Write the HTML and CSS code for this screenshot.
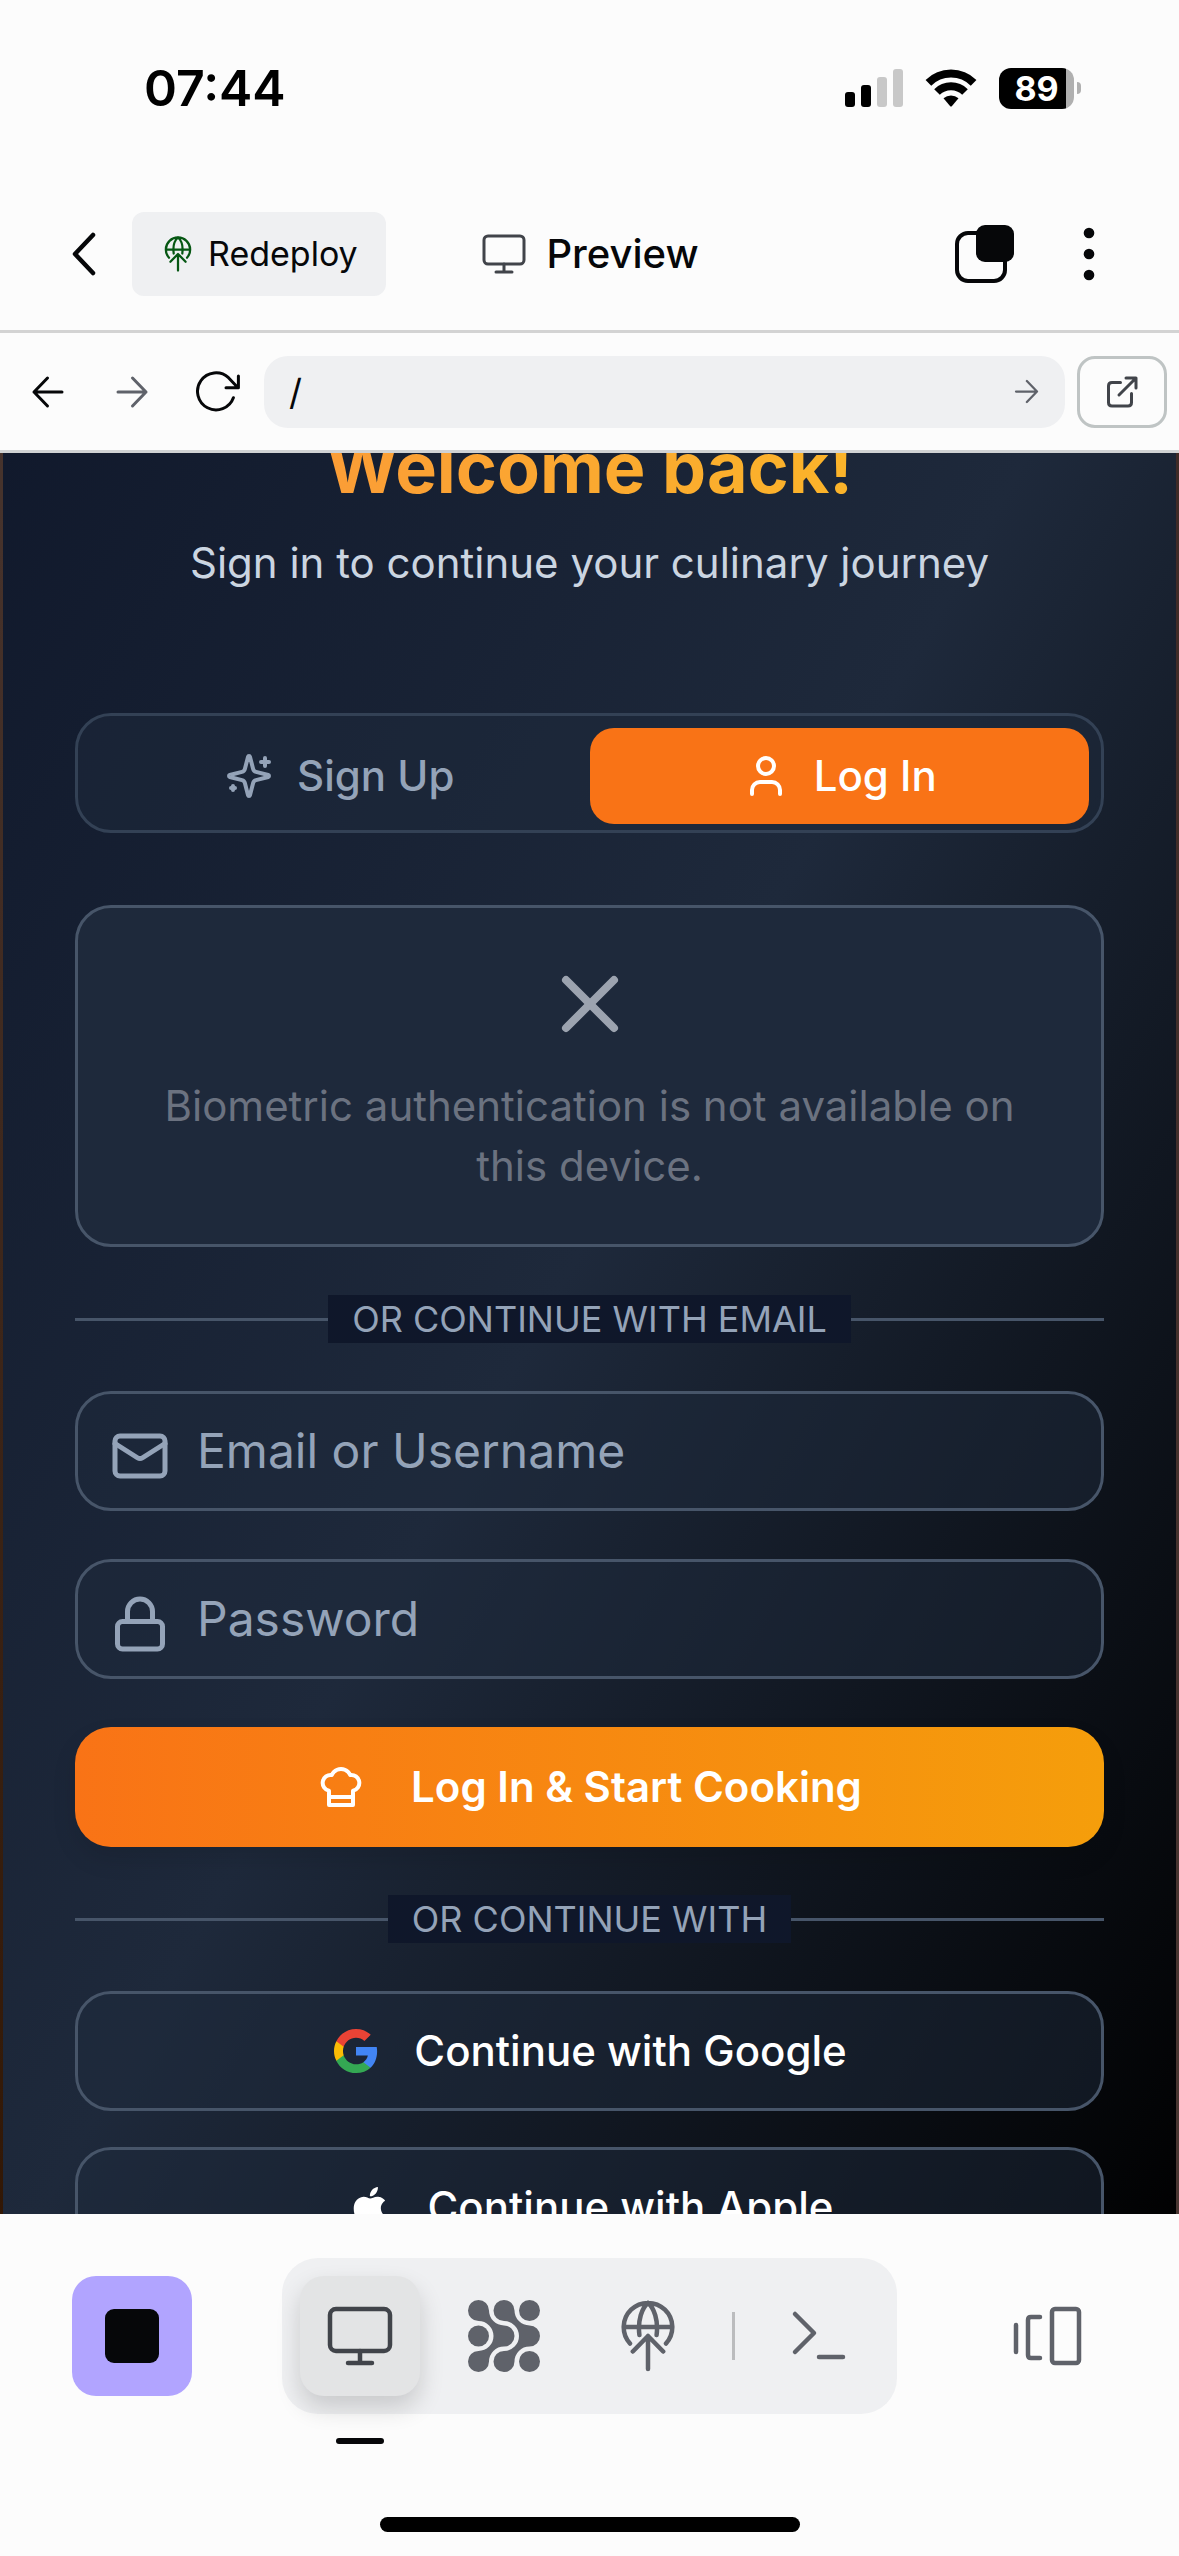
FILE: index.html
```html
<!DOCTYPE html>
<html lang="en">
<head>
<meta charset="utf-8">
<meta name="viewport" content="width=device-width, initial-scale=1">
<title>Preview</title>
<link rel="stylesheet" href="styles.css">
</head>
<body>
<svg class="defs" width="0" height="0" aria-hidden="true">
  <symbol id="monitor" viewBox="0 0 72 72">
    <rect x="6" y="9" width="60" height="42" rx="6"/><path d="M36 51v12M24 63h24"/>
  </symbol>
  <symbol id="deploy" viewBox="0 0 72 72">
    <path d="M18 43.500A24.300 24.300 0 1 1 54 43.500M12 27h48M36 3C30 8 25.500 20 27.400 35M36 3c6 5 10.500 17 8.600 32M36 36v33M20.800 51.500L36 36l15.200 15.500"/>
  </symbol>
</svg>

<div class="status">
  <span class="time">07:44</span>
  <div class="indicators">
    <svg width="58" height="38" viewBox="0 0 58 38" aria-hidden="true">
      <rect x="0" y="23" width="10" height="15" rx="3"/><rect x="16" y="16" width="10" height="22" rx="3"/>
      <g fill="#c8c8c8"><rect x="32" y="8" width="10" height="30" rx="3"/><rect x="48" y="0" width="10" height="38" rx="3"/></g>
    </svg>
    <svg width="52" height="38" viewBox="0 0 52 38" aria-hidden="true">
      <path d="M3.400 13.900a32 32 0 0 1 45.200 0M12 23a20 20 0 0 1 28 0" fill="none" stroke="#000" stroke-width="8"/>
      <path d="M18.500 29.200a11.500 11.500 0 0 1 15 0L27 37q-1 1-2 0z"/>
    </svg>
    <div class="battery"><span class="level">89</span></div>
  </div>
</div>

<header class="topbar">
  <div class="topbar-left">
    <button class="plain back" aria-label="Back">
      <svg width="24" height="48" viewBox="0 0 24 48"><path d="M21 5L3 24l18 19" stroke-width="4.500"/></svg>
    </button>
    <button class="redeploy">
      <svg width="36" height="36" stroke-width="4.500"><use href="#deploy"/></svg>Redeploy
    </button>
  </div>
  <h1 class="title"><svg width="48" height="48" stroke-width="4.500"><use href="#monitor"/></svg>Preview</h1>
  <div class="topbar-right">
    <button class="plain" aria-label="Tabs">
      <svg width="60" height="60" viewBox="0 0 60 60"><rect x="2" y="9" width="48" height="48" rx="11" stroke-width="4"/><rect x="21" y="1" width="38" height="37" rx="9" fill="#060709" stroke="none"/></svg>
    </button>
    <button class="plain" aria-label="More">
      <svg width="36" height="54" viewBox="0 0 36 54"><g fill="#060709" stroke="none"><circle cx="18" cy="6" r="5.300"/><circle cx="18" cy="27" r="5.300"/><circle cx="18" cy="48" r="5.300"/></g></svg>
    </button>
  </div>
</header>

<nav class="navbar">
  <div class="history">
    <button class="plain" aria-label="Go back"><svg width="36" height="36" viewBox="0 0 36 36"><path d="M32 18H4M17.500 4L4 18l13.500 14"/></svg></button>
    <button class="plain muted" aria-label="Go forward"><svg width="36" height="36" viewBox="0 0 36 36"><path d="M4 18h28M18.500 4L32 18 18.500 32"/></svg></button>
    <button class="plain" aria-label="Reload"><svg width="48" height="48" viewBox="-2 0 48 48"><path d="M39.400 29.700A18.500 18.500 0 1 1 34.500 9.700L44 19.700M44.400 8v11.700H32"/></svg></button>
  </div>
  <form class="address">
    <input type="text" value="/" aria-label="Path">
    <button type="button" class="plain muted" aria-label="Go"><svg width="27" height="27" viewBox="0 0 36 36"><path d="M4 18h28M18.500 4L32 18 18.500 32"/></svg></button>
  </form>
  <button class="plain external" aria-label="Open in new tab"><svg width="36" height="36" viewBox="0 0 36 36"><path d="M16.500 8.500H8Q4.500 8.500 4.500 12v16.500Q4.500 32 8 32h16q3.500 0 3.500-3.500V19.500M15 21L32 4M22 4h10v10"/></svg></button>
</nav>

<main class="preview">
  <div class="page">
    <h2 class="welcome">Welcome back!</h2>
    <p class="subtitle">Sign in to continue your culinary journey</p>

    <div class="tabs">
      <button class="tab">
        <svg class="lucide" viewBox="0 0 24 24"><path d="M9.937 15.500A2 2 0 0 0 8.500 14.063l-6.135-1.582a.5.5 0 0 1 0-.962L8.500 9.936A2 2 0 0 0 9.937 8.500l1.582-6.135a.5.5 0 0 1 .963 0L14.063 8.500A2 2 0 0 0 15.500 9.937l6.135 1.581a.5.5 0 0 1 0 .964L15.500 14.063a2 2 0 0 0-1.437 1.437l-1.582 6.135a.5.5 0 0 1-.963 0zM20 3v4M22 5h-4M4 17v2M5 18H3"/></svg>
        Sign Up
      </button>
      <button class="tab active">
        <svg class="lucide" viewBox="0 0 24 24"><path d="M19 21v-2a4 4 0 0 0-4-4H9a4 4 0 0 0-4 4v2"/><circle cx="12" cy="7" r="4"/></svg>
        Log In
      </button>
    </div>

    <section class="notice">
      <svg class="lucide" viewBox="0 0 24 24"><path d="M18 6L6 18M6 6l12 12"/></svg>
      <p>Biometric authentication is not available on this device.</p>
    </section>

    <form class="login">
      <div class="divider"><span>OR CONTINUE WITH EMAIL</span></div>
      <label class="field">
        <svg class="lucide" viewBox="0 0 24 24"><rect x="2" y="4" width="20" height="16" rx="2"/><path d="M22 7l-8.970 5.700a1.940 1.940 0 0 1-2.060 0L2 7"/></svg>
        <input type="text" placeholder="Email or Username" aria-label="Email or Username">
      </label>
      <label class="field">
        <svg class="lucide" viewBox="0 0 24 24"><rect x="3" y="11" width="18" height="11" rx="2"/><path d="M7 11V7a5 5 0 0 1 10 0v4"/></svg>
        <input type="password" placeholder="Password" aria-label="Password">
      </label>
      <button type="button" class="submit">
        <svg class="lucide" viewBox="0 0 24 24"><path d="M6 13.870A4 4 0 0 1 7.410 6a5.110 5.110 0 0 1 1.050-1.540 5 5 0 0 1 7.080 0A5.110 5.110 0 0 1 16.590 6 4 4 0 0 1 18 13.870V21H6ZM6 17h12"/></svg>
        Log In &amp; Start Cooking
      </button>
      <div class="divider"><span>OR CONTINUE WITH</span></div>
    </form>

    <div class="social">
      <button>
        <svg viewBox="0 0 24 24"><path fill="#4285f4" d="M22.560 12.250c0-.78-.07-1.530-.2-2.250H12v4.260h5.920c-.26 1.370-1.040 2.530-2.210 3.310v2.770h3.570c2.080-1.920 3.280-4.740 3.280-8.090z"/><path fill="#34a853" d="M12 23c2.970 0 5.460-.98 7.280-2.660l-3.570-2.770c-.98.66-2.230 1.060-3.710 1.060-2.860 0-5.290-1.930-6.160-4.530H2.180v2.840C3.990 20.530 7.700 23 12 23z"/><path fill="#fbbc05" d="M5.840 14.090c-.22-.66-.35-1.360-.35-2.090s.13-1.430.35-2.090V7.070H2.180C1.430 8.550 1 10.220 1 12s.43 3.450 1.180 4.930l3.660-2.840z"/><path fill="#ea4335" d="M12 5.380c1.620 0 3.060.56 4.210 1.640l3.150-3.150C17.450 2.090 14.970 1 12 1 7.700 1 3.990 3.470 2.180 7.070l3.660 2.840c.87-2.600 3.300-4.530 6.160-4.530z"/></svg>
        Continue with Google
      </button>
      <button>
        <svg viewBox="0 0 24 24"><path fill="#fff" d="M18.710 19.500c-.83 1.240-1.710 2.450-3.050 2.470-1.340.03-1.770-.79-3.290-.79-1.530 0-2 .77-3.270.82-1.310.05-2.300-1.320-3.140-2.530C4.250 17 2.940 12.450 4.700 9.390c.87-1.520 2.430-2.480 4.120-2.510 1.280-.02 2.500.87 3.290.87.78 0 2.260-1.070 3.810-.91.65.03 2.470.26 3.640 1.980-.09.06-2.170 1.280-2.150 3.810.03 3.020 2.650 4.030 2.680 4.040-.03.07-.42 1.440-1.380 2.830M13 3.500c.73-.83 1.940-1.460 2.940-1.500.13 1.170-.34 2.350-1.040 3.190-.69.85-1.830 1.510-2.950 1.420-.11-1.150.41-2.350 1.050-3.110z"/></svg>
        Continue with Apple
      </button>
    </div>
  </div>
</main>

<footer class="dock">
  <button class="plain stop" aria-label="Stop"><span></span></button>
  <div class="tools">
    <button class="plain tool selected" aria-label="Preview"><svg class="tool-icon"><use href="#monitor"/></svg></button>
    <button class="plain tool" aria-label="Agent">
      <svg class="tool-icon" viewBox="0 0 72 72"><g fill="#5f626a" stroke="none"><path d="M10.500 0A10.500 10.500 0 0 1 21 10.500A15 15 0 0 0 36 25.500A10.500 10.500 0 0 1 36 46.500A15 15 0 0 0 21 61.500A10.500 10.500 0 1 1 10.500 51A15 15 0 0 0 10.500 21A10.500 10.500 0 0 1 10.500 0Z"/><path d="M36 0A10.500 10.500 0 0 1 46.500 10.500A15 15 0 0 0 61.500 25.500A10.500 10.500 0 0 1 61.500 46.500A15 15 0 0 0 46.500 61.500A10.500 10.500 0 1 1 36 51A15 15 0 0 0 36 21A10.500 10.500 0 0 1 36 0Z"/><circle cx="61.500" cy="10.500" r="10.500"/><circle cx="10.500" cy="36" r="10.500"/><circle cx="61.500" cy="61.500" r="10.500"/></g></svg>
    </button>
    <button class="plain tool" aria-label="Deploy"><svg class="tool-icon"><use href="#deploy"/></svg></button>
    <span class="separator"></span>
    <button class="plain tool" aria-label="Shell"><svg class="tool-icon" viewBox="0 0 72 72"><path d="M12 14l19 19-19 19M36 57h24"/></svg></button>
  </div>
  <button class="plain tool" aria-label="Switch tabs"><svg class="tool-icon" viewBox="0 0 72 72"><path d="M5 25v27M29 17H20q-3 0-3 3v35q0 3 3 3h9"/><rect x="41" y="9" width="27" height="54" rx="3"/></svg></button>
</footer>
<div class="home"></div>
</body>
</html>
```
FILE: styles.css
```css
* {
  box-sizing: border-box;
}

body {
  margin: 0;
  height: 100vh;
  display: flex;
  flex-direction: column;
  background: #fcfcfc;
  color: #060709;
  font-family: Inter, "Liberation Sans", sans-serif;
}

h1, h2, p {
  margin: 0;
}

button, input {
  font: inherit;
  color: inherit;
  margin: 0;
  padding: 0;
  border: 0;
  background: none;
}

svg {
  display: block;
  flex: none;
}

.defs {
  position: absolute;
}

/* Status bar */
.status {
  flex: none;
  height: 150px;
  padding: 58px 98px 0 144px;
  display: flex;
  justify-content: space-between;
  align-items: flex-start;
  color: #000;
}

.time {
  font-size: 50px;
  line-height: 60px;
  font-weight: 600;
}

.indicators {
  height: 60px;
  display: flex;
  align-items: center;
  gap: 22px;
}

.battery {
  display: flex;
  align-items: center;
  gap: 3px;
}

.battery::after {
  content: "";
  width: 4px;
  height: 12px;
  border-radius: 0 4px 4px 0;
  background: #b0b0b0;
}

.level {
  width: 75px;
  height: 41px;
  border-radius: 12px;
  background: linear-gradient(90deg, #000 67px, #b0b0b0 67px);
  color: #fff;
  font-size: 34px;
  line-height: 41px;
  font-weight: 700;
  text-align: center;
}

/* App header */
.topbar {
  flex: none;
  padding: 62px 72px 34px;
  border-bottom: 3px solid #d3d3d3;
  display: grid;
  grid-template-columns: 1fr auto 1fr;
  align-items: center;
}

.topbar svg, .navbar svg, .dock svg {
  fill: none;
  stroke: currentColor;
  stroke-linecap: round;
  stroke-linejoin: round;
}

.plain {
  display: flex;
  align-items: center;
  justify-content: center;
}

.topbar-left, .topbar-right, .title {
  display: flex;
  align-items: center;
}

.topbar-left {
  gap: 36px;
}

.topbar-right {
  justify-content: flex-end;
  gap: 56px;
}

.redeploy {
  height: 84px;
  padding: 0 28px;
  display: flex;
  align-items: center;
  gap: 12px;
  border-radius: 12px;
  background: #eff0f2;
  font-size: 34px;
  line-height: 48px;
}

.redeploy svg {
  color: #065713;
}

.title {
  gap: 18px;
  font-size: 40px;
  line-height: 54px;
  font-weight: 500;
}

.title svg {
  color: #41444a;
}

/* Browser controls */
.navbar {
  flex: none;
  height: 120px;
  padding: 0 12px 0 6px;
  border-bottom: 3px solid #d0d2d3;
  display: flex;
  align-items: center;
  gap: 12px;
}

.navbar svg {
  stroke-width: 3;
}

.history {
  display: flex;
  margin-right: -6px;
}

.history button {
  width: 84px;
  height: 84px;
}

.muted {
  color: #5f626a;
}

.address {
  flex: 1;
  height: 72px;
  padding: 0 25px;
  border-radius: 24px;
  background: #eff0f2;
  display: flex;
  align-items: center;
}

.address input {
  flex: 1;
  min-width: 0;
  font-size: 36px;
}

.external {
  width: 90px;
  height: 72px;
  border: 3px solid #bfc4c4;
  border-radius: 18px;
  color: #41444a;
}

/* Previewed page, scrolled part of the way down */
.preview {
  flex: 1 1 0;
  min-height: 0;
  overflow: hidden;
}

.page {
  height: 2090px;
  margin-top: -263px;
  padding: 233px 72px 0;
  border: solid rgba(249, 115, 22, 0.2);
  border-width: 0 3px;
  background-image: linear-gradient(to bottom right, #0f172a, #1e293b, #000);
  color: #fff;
  font-size: 42px;
  line-height: 60px;
}

.lucide {
  width: 48px;
  height: 48px;
  fill: none;
  stroke: currentColor;
  stroke-width: 2;
  stroke-linecap: round;
  stroke-linejoin: round;
}

.welcome {
  margin-bottom: 20px;
  font-size: 70px;
  line-height: 90px;
  font-weight: 700;
  text-align: center;
  color: transparent;
  background: linear-gradient(to right, #fb923c, #fbbf24);
  -webkit-background-clip: text;
  background-clip: text;
}

.subtitle {
  margin-bottom: 120px;
  color: #cbd5e1;
  text-align: center;
}

.tabs {
  height: 120px;
  margin-bottom: 72px;
  padding: 12px 12px 6px;
  border: 3px solid #334155;
  border-radius: 36px;
  background: rgba(30, 41, 59, 0.5);
  display: grid;
  grid-template-columns: 1fr 1fr;
}

.tab {
  height: 96px;
  display: flex;
  align-items: center;
  justify-content: center;
  gap: 24px;
  border-radius: 24px;
  font-weight: 500;
  color: #94a3b8;
}

.tab.active {
  background: #f97316;
  color: #fff;
}

.notice {
  margin-bottom: 48px;
  padding: 48px 72px;
  border: 3px solid #475569;
  border-radius: 36px;
  background: #1e293b;
  display: flex;
  flex-direction: column;
  align-items: center;
  gap: 24px;
  color: #6b7280;
  text-align: center;
}

.notice svg {
  width: 96px;
  height: 96px;
  color: #9ca3af;
}

.login {
  display: flex;
  flex-direction: column;
  gap: 48px;
}

.divider {
  display: flex;
  align-items: center;
  color: #94a3b8;
  font-size: 36px;
  line-height: 48px;
}

.divider::before, .divider::after {
  content: "";
  flex: 1;
  height: 3px;
  background: #475569;
}

.divider span {
  padding: 0 24px;
  background: #0f172a;
}

.field {
  height: 120px;
  padding-left: 32px;
  border: 3px solid #475569;
  border-radius: 36px;
  background: rgba(30, 41, 59, 0.5);
  display: flex;
  align-items: center;
  gap: 27px;
  color: #94a3b8;
}

.field svg {
  width: 60px;
  height: 60px;
  margin-top: 10px;
}

.field input {
  flex: 1;
  min-width: 0;
  font-size: 48px;
  line-height: 72px;
  outline: 0;
}

.field input::placeholder {
  color: #94a3b8;
  opacity: 1;
}

.submit {
  height: 120px;
  border-radius: 36px;
  background: linear-gradient(to right, #f97316, #f59e0b);
  box-shadow: 0 12px 24px rgba(0, 0, 0, 0.1);
  display: flex;
  align-items: center;
  justify-content: center;
  gap: 46px;
  font-weight: 600;
}

.social {
  margin-top: 48px;
  display: flex;
  flex-direction: column;
  gap: 36px;
}

.social button {
  height: 120px;
  border: 3px solid #475569;
  border-radius: 36px;
  background: rgba(30, 41, 59, 0.5);
  display: flex;
  align-items: center;
  justify-content: center;
  gap: 34px;
  font-weight: 500;
}

.social svg {
  width: 48px;
  height: 48px;
}

/* Bottom dock */
.dock {
  flex: none;
  padding: 44px 72px 0;
  display: flex;
  align-items: center;
  justify-content: space-between;
  color: #5f626a;
}

.stop {
  width: 120px;
  height: 120px;
  border-radius: 24px;
  background: #b1a4ff;
}

.stop span {
  width: 54px;
  height: 54px;
  border-radius: 9px;
  background: #060709;
}

.tools {
  padding: 18px;
  border-radius: 36px;
  background: #eff0f2;
  display: flex;
  align-items: center;
  gap: 24px;
}

.separator {
  width: 3px;
  height: 48px;
  background: #bbbcbe;
}

.tool {
  width: 120px;
  height: 120px;
  border-radius: 24px;
}

.tool-icon {
  width: 72px;
  height: 72px;
  stroke-width: 4.5;
}

.selected {
  position: relative;
  background: #e3e4e5;
  color: #41444a;
  box-shadow: 0 12px 24px rgba(0, 0, 0, 0.16);
}

.selected::after {
  content: "";
  position: absolute;
  left: 36px;
  bottom: -48px;
  width: 48px;
  height: 6px;
  border-radius: 3px;
  background: #060709;
}

.home {
  flex: none;
  width: 420px;
  height: 15px;
  margin: 103px auto 24px;
  border-radius: 8px;
  background: #000;
}
```
